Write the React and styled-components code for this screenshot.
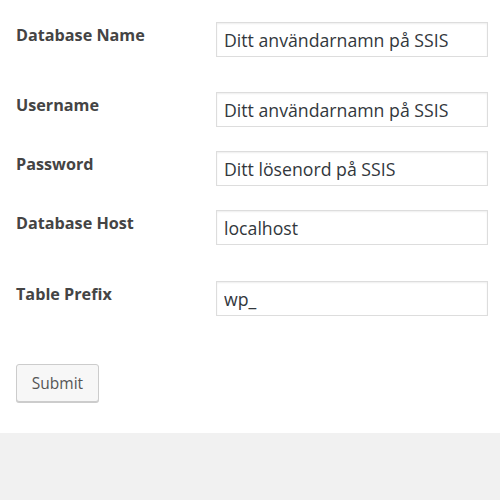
import React from 'react';
import styled, { createGlobalStyle } from 'styled-components';

const GlobalStyle = createGlobalStyle`
  html, body {
    margin: 0;
    padding: 0;
    background: #f1f1f1;
  }
  body {
    font-family: "Open Sans", "Noto Sans", sans-serif;
    color: #444;
  }
`;

const Panel = styled.div`
  background: #fff;
  height: 433px;
  box-shadow: 0 1px 3px rgba(0, 0, 0, 0.13);
  padding: 22px 0 0 16px;
  box-sizing: border-box;
`;

const Form = styled.form`
  display: flex;
  flex-direction: column;
`;

const Row = styled.div`
  display: grid;
  grid-template-columns: 200px 272px;
  align-items: start;
  height: ${(p) => p.$height}px;
`;

const Label = styled.label`
  font-size: 16.2px;
  font-weight: 700;
  color: #444;
  line-height: 24px;
  margin-top: 1px;
`;

const Input = styled.input`
  box-sizing: border-box;
  width: 272px;
  height: 35px;
  padding: 0 7px;
  border: 1px solid #ddd;
  box-shadow: inset 0 1px 2px rgba(0, 0, 0, 0.07);
  font-family: "Open Sans", "Noto Sans", sans-serif;
  font-size: 17.7px;
  color: #32373c;
  background: #fff;
  outline: none;
`;

const Submit = styled.button`
  align-self: flex-start;
  box-sizing: border-box;
  width: 83px;
  height: 38px;
  padding: 0 10px;
  background: #f7f7f7;
  border: 1px solid #ccc;
  border-radius: 3px;
  box-shadow: 0 1px 0 #ccc;
  color: #555;
  font-family: "Open Sans", "Noto Sans", sans-serif;
  font-size: 15.5px;
  cursor: pointer;
`;

const fields = [
  { id: 'dbname', label: 'Database Name', value: 'Ditt användarnamn på SSIS', height: 70 },
  { id: 'uname', label: 'Username', value: 'Ditt användarnamn på SSIS', height: 59 },
  { id: 'pwd', label: 'Password', value: 'Ditt lösenord på SSIS', height: 59 },
  { id: 'dbhost', label: 'Database Host', value: 'localhost', height: 71 },
  { id: 'prefix', label: 'Table Prefix', value: 'wp_', height: 83 },
];

export default function App() {
  return (
    <>
      <GlobalStyle />
      <Panel>
        <Form onSubmit={(e) => e.preventDefault()}>
          {fields.map((f) => (
            <Row key={f.id} $height={f.height}>
              <Label htmlFor={f.id}>{f.label}</Label>
              <Input id={f.id} type="text" defaultValue={f.value} />
            </Row>
          ))}
          <Submit type="submit">Submit</Submit>
        </Form>
      </Panel>
    </>
  );
}
